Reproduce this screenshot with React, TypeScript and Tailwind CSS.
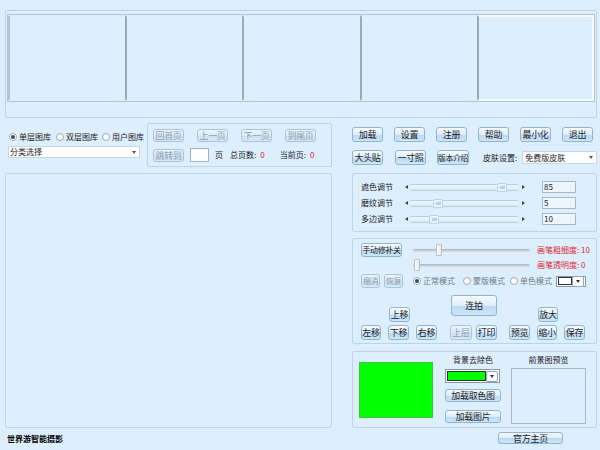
import React from 'react'

// 皮肤式桌面软件主界面（证件照 / 大头贴）
const FONT = "font-[family-name:'Noto_Sans_CJK_SC','Noto_Sans',sans-serif]"

function Btn({ children, w, h = 15, disabled = false, small = false, className = '' }: { children: React.ReactNode; w: number; h?: number; disabled?: boolean; small?: boolean; className?: string }) {
  return (
    <div
      className={`flex items-center justify-center overflow-hidden rounded-[3px] border leading-none shrink-0 ${
        small ? 'text-[8px] tracking-[-0.4px]' : 'text-[9px] tracking-[-0.3px]'
      } ${
        disabled
          ? 'border-[#a9c3d9] bg-[linear-gradient(#eef6fd,#dbeaf6_50%,#cbe0f0_51%,#d8e9f6)] text-[#8c9eb0]'
          : 'border-[#8fb3d2] bg-[linear-gradient(#f6fbff,#ddeefb_50%,#bcd9f1_51%,#cde5f7)] text-[#1b1b1b]'
      } ${className}`}
      style={{ width: w, height: h }}
    >
      {children}
    </div>
  )
}

function Radio({ label, checked = false, dim = false, w }: { label: string; checked?: boolean; dim?: boolean; w: number }) {
  return (
    <div
      className={`flex shrink-0 items-center gap-[2px] text-[8px] leading-none ${dim ? 'text-[#707d88]' : 'text-[#1b1b1b]'}`}
      style={{ width: w }}
    >
      <span className="flex h-[8px] w-[8px] shrink-0 items-center justify-center rounded-full border border-[#98a8b6] bg-white">
        {checked && <span className="h-[4px] w-[4px] rounded-full bg-[#3b4a55]" />}
      </span>
      <span>{label}</span>
    </div>
  )
}

function Caret({ color = '#333' }: { color?: string }) {
  return <span className="h-0 w-0 border-x-[2.5px] border-t-[3px] border-x-transparent" style={{ borderTopColor: color }} />
}

function Arrow() {
  return (
    <div className="flex h-[11px] w-[12px] items-center justify-center rounded-[2px] border border-[#8ea6ba] bg-white">
      <Caret />
    </div>
  )
}

function ScrollSlider({ pos }: { pos: number }) {
  return (
    <div className="flex h-[11px] w-[127px] items-center">
      <span className="flex w-[10px] justify-center">
        <span className="h-0 w-0 border-y-[2px] border-r-[3px] border-y-transparent border-r-[#444]" />
      </span>
      <div className="relative h-[7px] flex-1 border-y border-[#b5cfe3] bg-[linear-gradient(#f1f8fe,#d7e9f7)]">
        <div
          className="absolute top-[-2px] h-[9px] w-[10px] rounded-[1px] border border-[#bcd4ea] bg-[#e8f2fc]"
          style={{ left: pos }}
        >
          <div className="mx-auto mt-[2px] h-[3px] w-[5px] bg-[#b9cfea]" />
        </div>
      </div>
      <span className="flex w-[10px] justify-center">
        <span className="h-0 w-0 border-y-[2px] border-l-[3px] border-y-transparent border-l-[#444]" />
      </span>
    </div>
  )
}

function TrackBar({ pos }: { pos: number }) {
  return (
    <div className="relative h-[12px] w-[117px]">
      <div className="absolute left-0 right-0 top-[5px] h-[3px] rounded-full bg-[linear-gradient(#a9b3bb,#dfe4e8)]" />
      <div
        className="absolute top-0 h-[12px] w-[6px] rounded-[1px] border border-[#b7bec4] bg-[linear-gradient(90deg,#ffffff,#e3e9ee)]"
        style={{ left: pos }}
      />
    </div>
  )
}

export default function App() {
  const cells = [0, 1, 2, 3, 4]
  return (
    <div className={`h-[450px] w-[600px] overflow-hidden whitespace-nowrap bg-[#ddeefd] pl-[5px] pt-[10px] ${FONT}`}>
      {/* 顶部缩略图 */}
      <div className="h-[108px] w-[592px] rounded-[2px] border border-[#bcd4e8] pl-[1px] pt-[3px]">
        <div className="grid h-[88px] w-[588px] grid-cols-5 border border-[#b5c3ce]">
          {cells.map((i) => (
            <div
              key={i}
              className={`border-[2px] ${i === 4 ? 'border-[#f6fbff] border-l-[#9ea9b2]' : 'border-transparent border-l-[#9ea9b2]'} ${i === 0 ? 'border-l-[#b5c3ce]' : ''} bg-[#ddeefd]`}
            />
          ))}
        </div>
      </div>

      <div className="mt-[5px] flex gap-[20px]">
        {/* 左列 */}
        <div className="flex w-[327px] flex-col">
          <div className="flex h-[45px]">
            <div className="ml-[3px] w-[132px] pt-[10px]">
              <div className="flex items-center pl-[1px]">
                <Radio label="单层图库" checked w={47} />
                <Radio label="双层图库" w={46} />
                <Radio label="用户图库" w={38} />
              </div>
              <div className="mt-[5px] flex h-[12px] items-center border border-[#c5d6e4] bg-white text-[8px] leading-none text-[#1b1b1b]">
                <span className="flex-1 pl-[1px]">分类选择</span>
                <span className="flex w-[11px] justify-center">
                  <Caret color="#555" />
                </span>
              </div>
            </div>
            <div className="ml-[7px] h-[44px] w-[185px] rounded-[2px] border border-[#bcd4e8] pl-[5px] pt-[5px]">
              <div className="flex gap-[13px]">
                <Btn w={31} h={13} disabled>回首页</Btn>
                <Btn w={31} h={13} disabled>上一页</Btn>
                <Btn w={31} h={13} disabled>下一页</Btn>
                <Btn w={31} h={13} disabled>到尾页</Btn>
              </div>
              <div className="mt-[6px] flex items-center text-[8px] leading-none text-[#1b1b1b]">
                <Btn w={31} h={13} disabled>跳转到</Btn>
                <div className="ml-[6px] h-[14px] w-[19px] border border-[#9fb2c2] bg-white" />
                <span className="ml-[6px]">页</span>
                <span className="ml-[7px]">总页数:</span>
                <span className="ml-[4px] text-[#e0262e]">0</span>
                <span className="ml-[15px]">当前页:</span>
                <span className="ml-[4px] text-[#e0262e]">0</span>
              </div>
            </div>
          </div>
          <div className="mt-[5px] h-[255px] rounded-[2px] border border-[#c2d7ea]" />
          <div className="ml-[2px] mt-[5px] text-[8px] font-bold leading-[12px] text-black">世界游智能摄影</div>
        </div>

        {/* 右列 */}
        <div className="flex w-[245px] flex-col">
          <div className="mt-[4px] flex gap-[11px]">
            <Btn w={31}>加载</Btn>
            <Btn w={31}>设置</Btn>
            <Btn w={31}>注册</Btn>
            <Btn w={31}>帮助</Btn>
            <Btn w={31}>最小化</Btn>
            <Btn w={31}>退出</Btn>
          </div>
          <div className="mt-[8px] flex items-center">
            <Btn w={31}>大头贴</Btn>
            <Btn w={31} className="ml-[12px]">一寸照</Btn>
            <Btn w={32} small className="ml-[11px]">版本介绍</Btn>
            <span className="ml-[14px] text-[8px] leading-none text-[#1b1b1b]">皮肤设置:</span>
            <div className="ml-[5px] flex h-[13px] flex-1 items-center border border-[#c5d6e4] bg-white text-[8px] leading-none text-[#1b1b1b]">
              <span className="flex-1 pl-[2px]">免费版皮肤</span>
              <span className="flex w-[11px] justify-center">
                <Caret color="#555" />
              </span>
            </div>
          </div>

          {/* 调节滑块 */}
          <div className="mt-[8px] h-[59px] rounded-[2px] border border-[#bcd4e8] pl-[8px] pt-[5px]">
            {[
              ['遮色调节', 85, 86],
              ['磨纹调节', 5, 22],
              ['多边调节', 10, 18],
            ].map(([label, val, pos]) => (
              <div key={label as string} className="flex h-[16px] items-center">
                <span className="w-[40px] text-[8px] leading-none text-[#1b1b1b]">{label}</span>
                <ScrollSlider pos={pos as number} />
                <div className="ml-[14px] flex h-[12px] w-[34px] items-center border border-[#a9b7c3] bg-[#eef6fd] pl-[1px] text-[8px] leading-none text-[#1b1b1b]">
                  {val}
                </div>
              </div>
            ))}
          </div>

          {/* 手动修补 */}
          <div className="mt-[6px] h-[106px] rounded-[2px] border border-[#bcd4e8] pl-[8px] pt-[4px]">
            <div className="flex items-center">
              <Btn w={41} h={14} small>手动修补关</Btn>
              <div className="ml-[11px]">
                <TrackBar pos={23} />
              </div>
              <span className="ml-[7px] text-[8px] leading-none text-[#e0262e]">画笔粗细度: 10</span>
            </div>
            <div className="mt-[2px] flex items-center pl-[52px]">
              <TrackBar pos={1} />
              <span className="ml-[7px] text-[8px] leading-none text-[#e0262e]">画笔透明度: 0</span>
            </div>
            <div className="mt-[3px] flex items-center">
              <Btn w={19} h={14} small disabled>撤消</Btn>
              <Btn w={19} h={14} small disabled className="ml-[4px]">恢复</Btn>
              <div className="ml-[10px] flex items-center">
                <Radio label="正常模式" checked dim w={50} />
                <Radio label="蒙版模式" dim w={47} />
                <Radio label="单色模式" dim w={45} />
              </div>
              <div className="ml-[1px] flex h-[11px] w-[30px] items-center border border-[#8a96a0] bg-white">
                <div className="ml-[1px] h-[8px] w-[15px] border border-[#333] bg-white" />
                <div className="ml-auto mr-[1px]"><Arrow /></div>
              </div>
            </div>
            <div className="mt-[7px] flex h-[27px] items-end">
              <Btn w={21} className="ml-[28px]">上移</Btn>
              <Btn w={46} h={21} className="ml-[41px] self-start">连拍</Btn>
              <Btn w={20} className="ml-[41px]">放大</Btn>
            </div>
            <div className="mt-[3px] flex">
              <Btn w={20}>左移</Btn>
              <Btn w={21} className="ml-[7px]">下移</Btn>
              <Btn w={21} className="ml-[7px]">右移</Btn>
              <Btn w={22} disabled className="ml-[13px]">上层</Btn>
              <Btn w={21} className="ml-[4px]">打印</Btn>
              <Btn w={21} className="ml-[12px]">预览</Btn>
              <Btn w={20} className="ml-[7px]">缩小</Btn>
              <Btn w={21} className="ml-[7px]">保存</Btn>
            </div>
          </div>

          {/* 背景 */}
          <div className="mt-[7px] flex h-[77px] rounded-[2px] border border-[#bcd4e8] pl-[6px] pt-[10px]">
            <div className="h-[56px] w-[74px] border border-[#39c839] bg-[#00ff00]" />
            <div className="ml-[12px] flex w-[56px] flex-col items-center">
              <span className="mt-[-6px] text-[8px] leading-none text-[#1b1b1b]">背景去除色</span>
              <div className="mt-[5px] flex h-[14px] w-[55px] items-center self-start border border-[#8a96a0] bg-white">
                <div className="ml-[1px] h-[10px] w-[40px] border border-[#333] bg-[#00ff00]" />
                <div className="ml-auto mr-[1px]"><Arrow /></div>
              </div>
              <Btn w={56} h={13} className="mt-[6px]">加载取色图</Btn>
              <Btn w={56} h={13} className="mt-[8px]">加载图片</Btn>
            </div>
            <div className="ml-[10px] flex flex-col items-center">
              <span className="mt-[-6px] text-[8px] leading-none text-[#1b1b1b]">前景图预览</span>
              <div className="mt-[4px] h-[56px] w-[75px] border border-[#aab6c0]" />
            </div>
          </div>

          <Btn w={65} h={12} className="ml-[146px] mt-[4px]">官方主页</Btn>
        </div>
      </div>
    </div>
  )
}
